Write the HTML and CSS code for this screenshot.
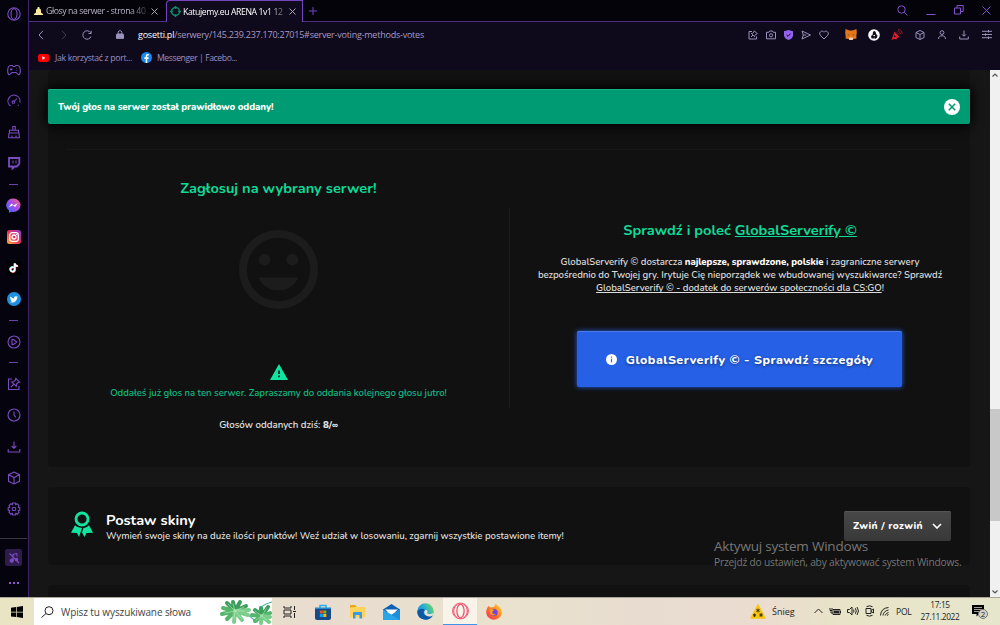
FILE: index.html
```html
<!DOCTYPE html>
<html lang="pl">
  <head>
    <meta charset="utf-8">
    <title>Katujemy.eu ARENA 1v1</title>
    <link rel="stylesheet" href="styles.css">
  </head>
  <body>
    <div class="screen">
      <div class="browser">
        <nav class="sidebar">
          <div class="opera">
            <svg width="14" height="14" viewBox="0 0 14 14"><circle cx="7" cy="7" r="6.2"/><ellipse cx="7" cy="7" rx="3" ry="5.4"/></svg>
          </div>
          <div class="side-list">
            <div class="side-item"><svg width="14" height="12" viewBox="0 0 14 12"><path d="M3.5 1.5h1.8l.8 1h1.8l.8-1h1.800c2 0 2.800 2.200 2.800 5.500 0 2.400-.6 3.600-1.600 3.600-1.200 0-1.700-2.100-2.800-2.100H5.100c-1.100 0-1.600 2.100-2.800 2.100-1 0-1.600-1.200-1.600-3.600 0-3.300.8-5.500 2.800-5.500z"/><path d="M3 5.400h2.400M4.200 4.200v2.400M9.600 4.400v.6M9.600 6v.6"/></svg></div>
            <div class="side-item"><svg width="14" height="14" viewBox="0 0 14 14"><path d="M3.500 12a6 6 0 1 1 9.300-3.500M10.800 11.600l.8-.7M6.800 8l3-3.500"/><circle cx="6.400" cy="8" r="1.300"/></svg></div>
            <div class="side-item"><svg width="14" height="14" viewBox="0 0 14 14"><path d="M5.800 5V1.500h2.400V5M2.500 8V5.300h9V8M2 8h10l.4 4.800H1.600L2 8M5 10.500v2.100M9 10.500v2.100"/></svg></div>
            <div class="side-item"><svg width="14" height="14" viewBox="0 0 14 14"><path class="thick" d="M2 2h10.300v6l-2.500 2.500H7.500L5.500 12.500v-2H2z"/><path d="M6 4.500v3M9 4.500v3"/></svg></div>
            <div class="side-sep"></div>
            <div class="side-item">
              <svg class="flat" width="15" height="15" viewBox="0 0 15 15">
                <defs><linearGradient id="msg" x1="0" y1="1" x2="1" y2="0"><stop offset="0" stop-color="#2777fb"/><stop offset=".5" stop-color="#a14af0"/><stop offset="1" stop-color="#ff6470"/></linearGradient></defs>
                <path fill="url(#msg)" d="M7.500.5a7 6.700 0 0 1 0 13.400l-2-.2L3 14.800V12.500A7 6.700 0 0 1 7.500.5z"/>
                <path fill="#fff" d="M2.800 9.200l2.700-3.600 2.300 1.600 3.900-1.900-2.500 3.600-2.500-1.600z"/>
              </svg>
            </div>
            <div class="side-item">
              <svg class="flat" width="14" height="14" viewBox="0 0 14 14">
                <defs><linearGradient id="insta" x1="0" y1="1" x2="1" y2="0"><stop offset="0" stop-color="#fdb733"/><stop offset=".5" stop-color="#e8305e"/><stop offset="1" stop-color="#8c3ad0"/></linearGradient></defs>
                <rect width="14" height="14" rx="2.500" fill="url(#insta)"/>
                <rect x="2.700" y="2.700" width="8.600" height="8.600" rx="2.400" fill="none" stroke="#fff" stroke-width="1.300"/><circle cx="7" cy="7" r="2" fill="none" stroke="#fff" stroke-width="1.300"/><circle cx="9.600" cy="4.500" r=".6" fill="#fff"/>
              </svg>
            </div>
            <div class="side-item">
              <svg class="flat" width="14" height="14" viewBox="0 0 14 14"><rect width="14" height="14" rx="2.500" fill="#000"/><g fill="none" stroke-width="1.700"><path stroke="#25e5e0" d="M6.400 6.300a2.200 2.200 0 1 0 1 2V2.300c.3 1.500 1.400 2.500 3 2.700"/><path stroke="#f6345d" d="M7.300 6.900a2.200 2.200 0 1 0 1 2V2.800c.3 1.500 1.400 2.500 3 2.700"/><path stroke="#fff" d="M6.800 6.600a2.200 2.200 0 1 0 1 2V2.500c.3 1.500 1.400 2.500 3 2.700"/></g></svg>
            </div>
            <div class="side-item">
              <svg class="flat" width="14" height="14" viewBox="0 0 14 14"><circle cx="7" cy="7" r="7" fill="#1d91e0"/><path fill="#fff" d="M11.200 4.400l-1 1.100c0 3.700-4 6.400-7.300 4.400 1 0 1.700-.2 2.300-.7-.8-.1-1.200-.5-1.400-1.100h.6c-.8-.3-1.200-.9-1.200-1.600l.6.2c-.6-.5-.8-1.300-.4-2.100 1 1.100 2.200 1.700 3.700 1.800-.3-1.900 1.600-2.700 2.800-1.600l1-.4-.5.8z"/></svg>
            </div>
            <div class="side-sep"></div>
            <div class="side-item"><svg width="14" height="14" viewBox="0 0 14 14"><circle cx="7" cy="7" r="6"/><path d="M5 4.600h1.500L9.800 7 6.500 9.400H5z"/></svg></div>
            <div class="side-sep"></div>
            <div class="side-item"><svg width="14" height="14" viewBox="0 0 14 14"><path d="M5 2H1.500v10.500H12V9M4 10l3-3M8.800 1.400l3.800 3.800-1.500.3-1.700 1.800-.2 2L4.700 4.900l2-.2 1.800-1.800z"/></svg></div>
            <div class="side-item"><svg width="14" height="14" viewBox="0 0 14 14"><circle cx="7" cy="7" r="6"/><path d="M7 3.500V7l1.800 2.300"/></svg></div>
            <div class="side-item"><svg width="14" height="14" viewBox="0 0 14 14"><path d="M7 1.500v6.500M4.700 6L7 8.300 9.300 6M1.200 9v3h11.600V9"/></svg></div>
            <div class="side-item"><svg width="14" height="14" viewBox="0 0 14 14"><path d="M7 1l5.500 2.700v6.600L7 13 1.500 10.300V3.700zM1.500 3.700L7 6.600l5.500-2.900M7 6.600V13"/></svg></div>
            <div class="side-item"><svg width="14" height="14" viewBox="0 0 14 14"><circle cx="7" cy="7" r="1.800"/><path d="M5.700 1h2.600l.4 1.600 1.400-.8 1.900 1.900-.8 1.500 1.600.5v2.600l-1.600.5.8 1.500-1.900 1.900-1.400-.8-.4 1.600H5.700l-.4-1.600-1.400.8L2 10.300l.8-1.500-1.600-.5V5.700l1.600-.5L2 3.700l1.900-1.900 1.400.8z"/></svg></div>
          </div>
          <div class="side-bottom">
            <div class="player"><svg width="12" height="12" viewBox="0 0 12 12"><path d="M5 8.500V2.500l4-1M9 1.500v3M1.500 1.500l9.500 9.500"/><circle class="dot" cx="3.700" cy="8.700" r="1.600"/><circle class="dot" cx="8.500" cy="7.500" r="1.200"/></svg></div>
            <div class="more"><i></i><i></i><i></i></div>
          </div>
        </nav>

        <div class="window">
          <header class="tabs">
            <div class="tab">
              <svg width="9" height="9" viewBox="0 0 9 9"><path fill="#fbe6a2" d="M3.600 0h1.800v1.200L7 2.800v2.700L9 7v1H0V7l2-1.500V2.800l1.600-1.600z"/></svg>
              <span class="tab-name">Głosy na serwer - strona 40</span>
              <svg class="close" width="7" height="7" viewBox="0 0 7 7"><path d="M.5.5l6 6M6.500.5l-6 6"/></svg>
            </div>
            <div class="tab active">
              <svg width="11" height="11" viewBox="0 0 11 11" fill="none" stroke="#0b8f68" stroke-width="1.400"><circle cx="5.500" cy="5.500" r="4"/><path d="M5.500 0v2.800M5.500 8.200V11M0 5.500h2.800M8.200 5.500H11"/></svg>
              <span class="tab-name">Katujemy.eu ARENA 1v1 12</span>
              <svg class="close" width="7" height="7" viewBox="0 0 7 7"><path d="M.5.5l6 6M6.500.5l-6 6"/></svg>
            </div>
            <svg class="new-tab" width="8" height="8" viewBox="0 0 8 8"><path d="M4 0v8M0 4h8"/></svg>
            <div class="window-buttons">
              <svg width="11" height="11" viewBox="0 0 11 11"><circle cx="4.500" cy="4.500" r="3.700"/><path d="M7.200 7.200l3.300 3.300"/></svg>
              <svg class="minimize" width="10" height="10" viewBox="0 0 10 10"><path d="M.5 9.500h9"/></svg>
              <svg width="10" height="10" viewBox="0 0 10 10"><path d="M.5 3h6v6h-6zM3 3V.5h6.200V6.500H6.500"/></svg>
              <svg width="9" height="9" viewBox="0 0 9 9"><path d="M.5.5l8 8M8.500.5l-8 8"/></svg>
            </div>
          </header>

          <div class="address-bar">
            <svg width="6" height="10" viewBox="0 0 6 10"><path d="M5 .8L1 5l4 4.200"/></svg>
            <svg class="off" width="6" height="10" viewBox="0 0 6 10"><path d="M1 .8L5 5 1 9.200"/></svg>
            <svg class="reload" width="10" height="10" viewBox="0 0 10 10"><path d="M9 6.500A4.200 4.200 0 1 1 8.600 2.700M9.200.8v2.700H6.500"/></svg>
            <svg class="lock" width="8" height="9" viewBox="0 0 8 9"><path d="M2.200 4V2.500a1.800 1.800 0 0 1 3.600 0V4"/><rect x=".5" y="4" width="7" height="4.800" rx=".6"/></svg>
            <span class="url"><b>gosetti.pl</b>/serwery/145.239.237.170:27015#server-voting-methods-votes</span>
            <div class="tools">
              <svg width="10" height="10" viewBox="0 0 10 10"><path d="M4 1.500H1v7.500h7.500V6.500M3 7l2-2M6.300.8l3 3-1.300.4-1.200 1.300-.2 1.200-3.200-3.200 1.200-.2L5.900 2z"/></svg>
              <svg width="10" height="10" viewBox="0 0 10 10"><path d="M.5 2.300h2.300l.8-1.300h2.800l.8 1.300h2.300v6.500h-9z"/><circle cx="5" cy="5.300" r="1.600"/></svg>
              <svg width="9" height="10" viewBox="0 0 9 10"><path class="shield" d="M4.500 0L9 1.300v4C9 7.500 7 9.300 4.500 10 2 9.300 0 7.500 0 5.300v-4z"/><path class="tick" d="M2.500 5l1.500 1.400 2.600-2.800"/></svg>
              <svg width="10" height="10" viewBox="0 0 10 10"><path d="M1 1l8.500 4L1 9l1.300-4zM2.300 5h3"/></svg>
              <svg width="10" height="10" viewBox="0 0 10 10"><path d="M5 9L1.200 5.200C-.7 2.800 2.800-.7 5 2.200 7.200-.7 10.700 2.800 8.800 5.200z"/></svg>
            </div>
            <div class="extensions">
              <svg class="flat" width="12" height="11" viewBox="0 0 12 11"><path fill="#e2761b" d="M.5 0l4 1.500h3l4-1.500.3 4-.5 3 .2 2.500-3 .5L7.500 11h-3l-1-1-3-.5L.7 7 .2 4z"/><path fill="#8c3f12" d="M2.500 5.300l2 .5-.7 1zM9.500 5.300l-2 .5.700 1z"/><path fill="#e8d3bd" d="M4.500 8.500h3L8 10l-.7 1H4.700L4 10z"/></svg>
              <svg class="flat" width="12" height="12" viewBox="0 0 12 12"><circle cx="6" cy="6" r="5.800" fill="#fff"/><path fill="#15111f" d="M6 2c1.500 0 2 1 1.800 2L8.500 5.500l1 1-.4 2-1.300 1.300H6.500V8L5.800 9.500H3.500L3 7l1.500-1L5 3z"/><path fill="#fff" d="M5.500 6h1.500v1H5.500z"/></svg>
              <svg class="flat" width="12" height="12" viewBox="0 0 12 12"><path fill="#dd1c2c" d="M3.500 2.500l5 5.500-2.500 1-.5 1.500-2-.5L.5 11z"/><path fill="none" stroke="#9c1426" d="M6 3.500l2 2M6.500 2c1.500 0 2.800 1.300 3 3M7 .5c2.500 0 4 2 4.200 4"/><path fill="#17111f" d="M3.500 6l1.500 2H2.600z"/></svg>
              <svg width="10" height="10" viewBox="0 0 10 10"><path d="M5 .5l4 2v5l-4 2-4-2v-5zM1 2.500l4 2 4-2M5 4.500v5"/></svg>
              <svg width="8" height="9" viewBox="0 0 8 9"><circle cx="4" cy="2.600" r="1.900"/><path d="M.7 9V8c0-3 6.600-3 6.600 0v1"/></svg>
              <svg width="10" height="10" viewBox="0 0 10 10"><path d="M5 .5V6M3 4.300l2 2 2-2M.7 6.500V9h8.600V6.500"/></svg>
              <svg width="10" height="9" viewBox="0 0 10 9"><path d="M0 1.300h10M0 4.500h10M0 7.700h10M6.500 0v2.500M3.500 3.300v2.500M6.500 6.500V9"/></svg>
            </div>
          </div>

          <div class="bookmarks">
            <svg width="11" height="8" viewBox="0 0 11 8"><rect width="11" height="8" rx="2" fill="#f00"/><path fill="#fff" d="M4.400 2.200l3 1.800-3 1.800z"/></svg>
            <span>Jak korzystać z port...</span>
            <svg width="11" height="11" viewBox="0 0 11 11"><circle cx="5.500" cy="5.500" r="5.500" fill="#1688f0"/><path fill="#fff" d="M4.700 11V7H3.300V5.300h1.400V4.100C4.700 2.700 5.500 2 6.800 2l1 .1v1.400H7c-.6 0-.8.400-.8.8v1h1.500L7.500 7H6.200v4z"/></svg>
            <span class="bm-messenger">Messenger | Facebo...</span>
          </div>

          <div class="viewport">
            <main class="page">
              <section class="panel vote">
                <div class="columns">
                  <div class="vote-left">
                    <h2>Zagłosuj na wybrany serwer!</h2>
                    <svg class="smile" width="95" height="95" viewBox="0 0 24 24"><path d="M12 2a10 10 0 1 0 0 20 10 10 0 0 0 0-20zm0 18a8 8 0 1 1 0-16 8 8 0 0 1 0 16zM8.500 11a1.500 1.500 0 1 0 0-3 1.500 1.500 0 0 0 0 3zm7 0a1.500 1.500 0 1 0 0-3 1.500 1.500 0 0 0 0 3zM7 14h10c-.8 2-2.700 3.300-5 3.300S7.800 16 7 14z"/></svg>
                    <svg class="warning" width="18" height="16" viewBox="0 0 18 16"><path fill="#0fe5a0" d="M9 0l9 16H0z"/><path fill="#111" d="M8.200 6.500h1.600v3.600H8.200zM8.200 11.600h1.600v1.700H8.200z"/></svg>
                    <p class="voted">Oddałeś już głos na ten serwer. Zapraszamy do oddania kolejnego głosu jutro!</p>
                    <p class="count">Głosów oddanych dziś: <b>8/∞</b></p>
                  </div>
                  <div class="vote-right">
                    <h2>Sprawdź i poleć <a>GlobalServerify ©</a></h2>
                    <p class="desc">
                      <span class="line">GlobalServerify © dostarcza <b>najlepsze, sprawdzone, polskie</b> i zagraniczne serwery</span>
                      <span class="line">bezpośrednio do Twojej gry. Irytuje Cię nieporządek we wbudowanej wyszukiwarce? Sprawdź</span>
                      <span class="line"><a>GlobalServerify © - dodatek do serwerów społeczności dla CS:GO</a>!</span>
                    </p>
                    <div class="btn-details">
                      <svg width="11" height="11" viewBox="0 0 11 11"><circle cx="5.500" cy="5.500" r="5.500" fill="#fff"/><path fill="#2560e6" d="M4.900 4.700h1.200v3.500H4.900zM4.900 2.600h1.200v1.200H4.900z"/></svg>
                      <span>GlobalServerify © - Sprawdź szczegóły</span>
                    </div>
                  </div>
                </div>
              </section>

              <section class="panel skins">
                <svg width="22" height="26" viewBox="0 0 22 26"><circle cx="11" cy="8" r="6" fill="none" stroke="#0fe5a0" stroke-width="2.800"/><path fill="#0fe5a0" d="M4 14.200C6 16 9 17 11 17l-3 9-2-4-6-.3zM18 14.200C16 16 14.500 16.800 12.500 17L11 21.500l2.500 4.500 2-4 6.500-.3z"/></svg>
                <div class="skins-text">
                  <h3>Postaw skiny</h3>
                  <p>Wymień swoje skiny na duże ilości punktów! Weź udział w losowaniu, zgarnij wszystkie postawione itemy!</p>
                </div>
                <div class="btn-toggle">
                  <span>Zwiń / rozwiń</span>
                  <svg width="10" height="6" viewBox="0 0 10 6"><path d="M1 1l4 4 4-4"/></svg>
                </div>
              </section>

              <section class="panel next"></section>
            </main>
            <div class="alert">
              <span>Twój głos na serwer został prawidłowo oddany!</span>
              <svg width="16" height="16" viewBox="0 0 16 16"><circle cx="8" cy="8" r="8" fill="#fff"/><path d="M4.800 4.800l6.400 6.400M11.200 4.800l-6.400 6.400" stroke="#009b72" stroke-width="1.500"/></svg>
            </div>
            <div class="activate">
              <div class="activate-title">Aktywuj system Windows</div>
              <div class="activate-text">Przejdź do ustawień, aby aktywować system Windows.</div>
            </div>
            <div class="scrollbar">
              <svg width="6" height="4" viewBox="0 0 6 4"><path d="M.5 3.500L3 1l2.500 2.500"/></svg>
              <div class="thumb"></div>
              <svg width="6" height="4" viewBox="0 0 6 4"><path d="M.5.5L3 3 5.500.5"/></svg>
            </div>
          </div>
        </div>
      </div>

      <footer class="taskbar">
        <div class="start"><svg width="12" height="12" viewBox="0 0 12 12"><path d="M0 1.700L5 1v4.700H0zM5.700.900L12 0v5.700H5.700zM0 6.400h5v4.700l-5-.7zM5.700 6.400H12V12l-6.300-.9z"/></svg></div>
        <div class="search">
          <svg width="13" height="12" viewBox="0 0 13 12"><circle cx="8" cy="4.700" r="4" fill="none" stroke="#222"/><path d="M5 7.500L.5 11.500" stroke="#222"/></svg>
          <span>Wpisz tu wyszukiwane słowa</span>
          <svg class="plant" width="54" height="26" viewBox="0 0 54 26">
            <path class="stem" d="M40 14c1-6 6-9 14-11M22 12c8 2 12 8 17 11"/>
            <g class="leaf">
              <path class="far" d="M17 12L9 4M17 12L15 3M17 12l5-9M17 12l11-5"/>
              <path d="M17 12L5 9M17 12L4 15M17 12L9 20"/>
              <path class="near" d="M17 12l-1 11M17 12l7 9M17 12l13 4M17 12l14-1"/>
            </g>
            <g class="leaf">
              <path class="far" d="M44 17l-7-6M44 17l-1-8M44 17l6-9"/>
              <path d="M44 17l-10-1M44 17l-7 5M44 17l8-3"/>
              <path class="near" d="M44 17l-1 7M44 17l7 6M44 17l8 1"/>
            </g>
            <path class="vein" d="M17 12L10 5M17 12l-2-7M17 12l9-4M17 12L7 14M17 12l-1 8M17 12l6 7M17 12h10M44 17l-7-5M44 17l4-7M44 17l-6 4M44 17l5 4"/>
          </svg>
        </div>
        <div class="apps">
          <div class="app"><svg width="13" height="12" viewBox="0 0 13 12" fill="none" stroke="#222"><path d="M1 0v2h7V0M1 12v-2h7v2M1 4h7v4H1zM11.500 0v4M11.500 7v5M10 5.500h3"/></svg></div>
          <div class="app"><svg width="16" height="16" viewBox="0 0 16 16"><path d="M5 4V1.500h6V4" fill="none" stroke="#24b2ee" stroke-width="1.500"/><path fill="#174a86" d="M0 4h16v10a2 2 0 0 1-2 2H2a2 2 0 0 1-2-2z"/><path fill="#2289d0" d="M0 3.500h16V5H0z"/><path fill="#f25022" d="M4.800 6.500h3v3h-3z"/><path fill="#7fba00" d="M8.300 6.500h3v3h-3z"/><path fill="#00a4ef" d="M4.800 10h3v3h-3z"/><path fill="#ffb900" d="M8.300 10h3v3h-3z"/></svg></div>
          <div class="app"><svg width="15" height="14" viewBox="0 0 15 14"><path fill="#e6a817" d="M0 0h5l1.500 1.500V5H0z"/><path fill="#ffd35c" d="M0 2.500l6-.5h9v10.500H0z"/><path fill="#3b9be0" d="M3 13.500V8a1 1 0 0 1 1-1h7a1 1 0 0 1 1 1v5.500H9.500V10h-4v3.500z"/></svg></div>
          <div class="app"><svg width="17" height="16" viewBox="0 0 17 16"><path fill="#0e62b5" d="M8.500 0L17 5.500V8H0V5.500z"/><path fill="#fff" d="M2 5.500h13L8.500 11z"/><path fill="#28a6e8" d="M0 5.500l8.500 5.200L17 5.500V16H0z"/><path fill="#1f8fdc" d="M17 5.500V16L6 9.500l2.500 1.200z"/></svg></div>
          <div class="app">
            <svg width="17" height="17" viewBox="0 0 17 17">
              <defs><linearGradient id="edge" x1="0" y1=".8" x2="1" y2=".2"><stop offset="0" stop-color="#1683cc"/><stop offset=".5" stop-color="#24a8dd"/><stop offset="1" stop-color="#6fdc5c"/></linearGradient></defs>
              <circle cx="8.500" cy="8.500" r="8.300" fill="url(#edge)"/><path fill="#0d57a5" d="M.3 8.500C2 5.500 6 5 8 7c-3 2-1.500 7.500 7.500 6A8.300 8.300 0 0 1 .3 8.500z"/><path fill="#ebe0cf" d="M8 7.200c2.300-.7 3.300 1.300 2.300 2.600-.5 1.300 3 2 6.200.2-.3 1.500-.8 2.300-1.500 3-5 1.800-9.500-2.500-7-5.800z"/>
            </svg>
          </div>
          <div class="app current"><svg width="17" height="18" viewBox="0 0 17 18" fill="none" stroke="#f0506e"><circle cx="8.500" cy="9" r="7.900"/><ellipse cx="8.500" cy="9" rx="3.600" ry="6.800" stroke-width="1.300"/><path d="M5.500 2.200a8 8 0 0 0 0 13.600M11.500 2.200a8 8 0 0 1 0 13.600"/></svg></div>
          <div class="app">
            <svg width="16" height="16" viewBox="0 0 16 16">
              <defs><linearGradient id="fox" x1="0" y1="1" x2="1" y2="0"><stop offset="0" stop-color="#f5246a"/><stop offset=".5" stop-color="#ff7a1f"/><stop offset="1" stop-color="#ffe03a"/></linearGradient></defs>
              <path fill="url(#fox)" d="M2.500 2l2 1.500L8 3 9.500 0C13 2 16 5 15.800 9A7.900 7.900 0 0 1 .2 9C0 6 1 4 2.500 2z"/><circle cx="8" cy="8.500" r="3.600" fill="#7541d8"/><path fill="#ff9a20" d="M3.500 5c2-.7 3.500 0 4.500 1.500L6 8c.5 1.500 2 2.500 4 2-2 2.500-5.500 1.500-6.300-1z"/>
            </svg>
          </div>
        </div>
        <div class="tray">
          <svg class="weather" width="16" height="15" viewBox="0 0 16 15"><path fill="#f8c512" stroke="#f8c512" stroke-linejoin="round" stroke-width="1.500" d="M8 1l7 13H1z"/><path stroke="#222" stroke-width=".8" d="M8 4.500v4M6.300 5.500l3.400 2M9.700 5.500l-3.400 2M4.500 9.500v3.500M3 10.300l3 1.800M6 10.300l-3 1.800M11 9v4M9.300 10l3.400 2M12.700 10l-3.400 2"/></svg>
          <span class="weather-name">Śnieg</span>
          <svg class="ico chevron" width="9" height="6" viewBox="0 0 9 6"><path d="M.5 5l4-4 4 4"/></svg>
          <svg class="ico" width="12" height="9" viewBox="0 0 12 9"><path d="M4 2.500h7v5H4zM1 1v2.500h2V1M2 3.500V6h2"/><path class="fill" d="M5 3.500h5v3H5zM11 4h1v2h-1z"/></svg>
          <svg class="ico" width="12" height="10" viewBox="0 0 12 10"><path d="M.5 3.500h2L5 1v8L2.500 6.500h-2zM6.500 3.500q1 1.500 0 3M8.300 2.200q2 2.800 0 5.600M10 1q3 4 0 8"/></svg>
          <svg class="ico" width="9" height="12" viewBox="0 0 9 12"><path d="M1 3.500h5v5H1zM6 5.500l2.500-1.500v4L6 6.500M1.500 1.700Q4.500 0 7.500 1.700M1.500 10.300q3 1.700 6 0"/></svg>
          <svg class="ico wifi" width="9" height="9" viewBox="0 0 9 9"><path d="M.5 8.500Q1 1 8.500.5M3 8.500Q3.500 4 8.500 3M5.200 8.500Q6 6 8.500 5.500M7 8.500l1.500-1"/></svg>
          <span class="lang">POL</span>
          <div class="clock"><div>17:15</div><div>27.11.2022</div></div>
          <div class="notify"><svg width="12" height="12" viewBox="0 0 12 12"><path d="M0 0h12v9H7L4.500 11.500V9H0z"/><path d="M2 2.500h8M2 4.500h8M2 6.500h5" stroke="#e8e4cc" stroke-width=".7"/></svg><span class="badge">2</span></div>
        </div>
      </footer>
    </div>
  </body>
</html>
```
FILE: styles.css
```css
* {
  box-sizing: border-box;
}
body {
  margin: 0;
  font-family: "Open Sans", "Noto Sans", sans-serif;
}
h2,
h3,
p {
  margin: 0;
}
svg {
  display: block;
  flex-shrink: 0;
}
.screen {
  width: 1000px;
  height: 625px;
  display: flex;
  flex-direction: column;
  overflow: hidden;
  background-color: #111;
}
.browser {
  flex: 1;
  min-height: 0;
  display: flex;
}

/* sidebar */
.sidebar {
  width: 29px;
  display: flex;
  flex-direction: column;
  background-color: #05030d;
  border-right: 1px solid #3d2468;
  padding-right: 1px;
}
.sidebar svg {
  fill: none;
  stroke: #7a4cc0;
  stroke-width: 1.1;
}
.sidebar svg.flat {
  stroke: none;
}
.sidebar .thick {
  stroke-width: 1.8;
}
.opera {
  height: 28px;
  display: flex;
  align-items: center;
  justify-content: center;
}
.side-list {
  flex: 1;
  padding-top: 26px;
}
.side-item {
  height: 31.27px;
  display: flex;
  align-items: center;
  justify-content: center;
}
.side-sep {
  height: 11px;
  padding-top: 5px;
}
.side-sep::before {
  content: "";
  display: block;
  width: 9px;
  height: 1px;
  margin: 0 auto;
  background-color: #6a41a8;
}
.side-bottom {
  height: 59px;
  border-top: 1px solid #3c3843;
  padding-top: 10px;
}
.player {
  width: 17px;
  height: 17px;
  margin: 0 auto;
  display: flex;
  align-items: center;
  justify-content: center;
  background-color: #2c1b4b;
  border-radius: 2px;
}
.sidebar .dot {
  fill: #7a4cc0;
}
.more {
  display: flex;
  justify-content: center;
  gap: 2px;
  margin-top: 16px;
}
.more i {
  width: 2px;
  height: 2px;
  background-color: #8a5bd0;
}

/* tabs and toolbars */
.window {
  flex: 1;
  min-width: 0;
  display: flex;
  flex-direction: column;
}
.tabs {
  height: 22px;
  display: flex;
  align-items: center;
  background-color: #04030a;
  box-shadow: inset 0 -1px #4e2e85;
}
.tab {
  width: 137px;
  height: 22px;
  padding: 0 8px 0 5px;
  display: flex;
  align-items: center;
  font-size: 8.7px;
  color: #b9b4c4;
}
.tab-name {
  flex: 1;
  margin: 0 3px 0 3px;
  white-space: nowrap;
  letter-spacing: -0.4px;
  -webkit-mask-image: linear-gradient(to right, #000 82%, rgba(0, 0, 0, 0.2));
  mask-image: linear-gradient(to right, #000 82%, rgba(0, 0, 0, 0.2));
}
.tab.active {
  background-color: #0f0b1c;
  border: 1px solid #7545c0;
  border-bottom: none;
  border-radius: 4px 0 0 0;
  padding: 0 6px 0 3px;
  color: #fff;
}
.active .tab-name {
  margin-left: 2px;
}
.close {
  stroke: #aaa5b5;
}
.new-tab {
  margin-left: 6px;
  stroke: #7545c0;
}
.window-buttons {
  margin-left: auto;
  margin-right: 9px;
  padding-bottom: 2px;
  display: flex;
  align-items: center;
  gap: 18px;
}
.window-buttons svg {
  fill: none;
  stroke: #8250d0;
}
.address-bar {
  height: 26px;
  display: flex;
  align-items: center;
  padding: 0 8px 1px 9px;
  background-color: #0e0a1b;
}
.address-bar svg {
  fill: none;
  stroke: #9c91bb;
}
.address-bar > svg {
  margin-right: 17px;
}
.address-bar .off {
  margin-right: 15px;
  stroke: #433c58;
}
.address-bar .lock {
  margin: 0 14px 0 7px;
}
.lock rect {
  fill: #9c91bb;
}
.url {
  font-size: 9px;
  letter-spacing: -0.23px;
  color: #a79bc6;
}
.url b {
  font-weight: normal;
  color: #fff;
}
.tools {
  margin-left: auto;
  display: flex;
  align-items: center;
  gap: 8px;
}
.address-bar .shield {
  fill: #9461f0;
  stroke: none;
}
.address-bar .tick {
  stroke: #0e0a1b;
}
.extensions {
  margin-left: 16px;
  display: flex;
  align-items: center;
  gap: 13px;
}
.extensions svg.flat {
  margin-right: -2px;
  stroke: none;
}
.extensions svg.flat + svg:not(.flat) {
  margin-left: 1px;
}
.bookmarks {
  height: 22px;
  display: flex;
  align-items: center;
  padding: 0 0 3px 9px;
  background-color: #0e0a1b;
  font-size: 8.7px;
  letter-spacing: -0.33px;
  color: #9b8fc0;
}
.bookmarks span {
  width: 78px;
  margin: 0 8px 0 6px;
  white-space: nowrap;
}
.bookmarks .bm-messenger {
  margin-left: 5px;
  width: 90px;
  letter-spacing: -0.45px;
}

/* page */
.viewport {
  position: relative;
  flex: 1;
  min-height: 0;
  display: flex;
  overflow: hidden;
  background-color: #161616;
  font-family: Nunito, Lato, sans-serif;
}
.page {
  width: 961px;
  padding: 0 20px 0 19px;
}
.panel {
  background-color: #111;
  border-radius: 4px;
  margin-bottom: 20px;
}
.vote {
  height: 397px;
  padding: 79px 0 0;
}
.columns {
  display: grid;
  grid-template-columns: 1fr 1fr;
  text-align: center;
}
.columns::before {
  content: "";
  grid-column: 1 / 3;
  height: 1px;
  margin: 0 18px;
  background-color: #181818;
}
.columns h2 {
  font-size: 14.6px;
  line-height: 20px;
  color: #0ddb98;
}
.columns a {
  text-decoration: underline;
}
.vote-left {
  padding-top: 28px;
}
.smile {
  margin: 24px auto 0;
  fill: #1c1c1c;
}
.warning {
  margin: 47px auto 0;
}
.voted {
  margin-top: 6px;
  font-size: 9.6px;
  font-weight: 600;
  line-height: 14px;
  letter-spacing: -0.05px;
  color: #10b981;
}
.count {
  margin-top: 18px;
  font-size: 9.7px;
  font-weight: 600;
  line-height: 14px;
  color: #e4e4e4;
}
.count b {
  font-weight: 800;
}
.vote-right {
  height: 200px;
  margin-top: 58px;
  padding-top: 12px;
  border-left: 1px solid #1a1a1a;
}
.desc {
  margin-top: 15px;
  font-size: 9.6px;
  font-weight: 600;
  line-height: 13.2px;
  letter-spacing: -0.05px;
  color: #dcdcdc;
}
.desc b {
  font-weight: 800;
  color: #fff;
}
.line {
  display: block;
  white-space: nowrap;
}
.btn-details {
  width: 325px;
  height: 56px;
  margin: 36px 0 0 67px;
  padding-top: 2px;
  display: flex;
  align-items: center;
  justify-content: center;
  gap: 9px;
  background-color: #2560e6;
  border-radius: 2px;
  box-shadow: inset 0 1px #4b7ae0, 0 0 5px #2560e6;
  font-size: 12.4px;
  font-weight: 800;
  letter-spacing: 0.5px;
  color: #fff;
  text-shadow: 0 1px 3px rgba(0, 0, 0, 0.5);
}
.skins {
  height: 78px;
  padding: 0 19px 0 23px;
  display: flex;
  align-items: center;
}
.skins > svg {
  margin-bottom: 4px;
}
.skins-text {
  flex: 1;
  margin-left: 13px;
  padding-top: 1px;
}
.skins h3 {
  font-size: 14.6px;
  line-height: 18px;
  color: #fff;
}
.skins p {
  font-size: 9.6px;
  font-weight: 600;
  line-height: 14px;
  letter-spacing: -0.06px;
  color: #dcdcdc;
}
.btn-toggle {
  width: 107px;
  height: 30px;
  margin-bottom: 1px;
  display: flex;
  align-items: center;
  justify-content: center;
  gap: 9px;
  background: linear-gradient(#484848, #383838);
  border-radius: 2px;
  box-shadow: inset 0 1px #555;
  font-size: 10.2px;
  font-weight: 800;
  letter-spacing: 0.4px;
  color: #fff;
}
.btn-toggle svg {
  fill: none;
  stroke: #fff;
  stroke-width: 1.6;
}
.next {
  height: 40px;
}
.alert {
  position: absolute;
  left: 19px;
  top: 19px;
  width: 922px;
  height: 35px;
  padding: 0 10px;
  display: flex;
  align-items: center;
  justify-content: space-between;
  background-color: #009b72;
  border-radius: 2px;
  box-shadow: inset 0 1px #12b386, 0 0 12px 2px #000;
  font-size: 9.7px;
  font-weight: 800;
  letter-spacing: -0.09px;
  color: #fff;
}
.activate {
  position: absolute;
  left: 685px;
  top: 467px;
  white-space: nowrap;
  font-family: "Open Sans", sans-serif;
  color: #777;
}
.activate-title {
  font-size: 13.5px;
  line-height: 18px;
  letter-spacing: -0.2px;
}
.activate-text {
  font-size: 10.2px;
  line-height: 14px;
  letter-spacing: -0.19px;
}
.scrollbar {
  width: 10px;
  margin-left: auto;
  padding: 3px 0;
  display: flex;
  flex-direction: column;
  align-items: center;
  background-color: #f0f0f0;
}
.scrollbar svg {
  fill: none;
  stroke: #555;
  stroke-width: 1.2;
}
.thumb {
  width: 10px;
  height: 112px;
  margin: 332px 0 auto;
  background-color: #c8c8c8;
}

/* taskbar */
.taskbar {
  height: 28px;
  display: flex;
  border-top: 1px solid #aaa69a;
  background: linear-gradient(to right, #e9e4c4 0, #e9e1cb 200px, #e8dccf 330px, #e9e2cd 500px, #e8dcd0 640px, #ebdcd0 760px, #e8e4c8 850px, #e6e6cc);
  color: #222;
}
.start {
  width: 34px;
  display: flex;
  align-items: center;
  justify-content: center;
}
.search {
  width: 238px;
  padding-left: 7px;
  display: flex;
  align-items: center;
  background-color: #fff;
  font-size: 10px;
  letter-spacing: -0.1px;
  color: #444;
}
.search span {
  flex: 1;
  margin-left: 7px;
  white-space: nowrap;
}
.plant {
  fill: none;
  stroke-linecap: round;
}
.stem {
  stroke: #44aa9a;
  stroke-width: 1.2;
}
.leaf {
  stroke: #55b56c;
  stroke-width: 4;
}
.leaf .far {
  stroke: #3c9d5c;
}
.leaf .near {
  stroke: #7bcd8c;
}
.vein {
  stroke: #b9ecb8;
  stroke-width: 0.6;
}
.apps {
  display: flex;
}
.app {
  width: 34.2px;
  display: flex;
  align-items: center;
  justify-content: center;
}
.current {
  background-color: #f8f4ea;
  border-bottom: 1px solid #3d94e8;
}
.tray {
  flex: 1;
  display: flex;
  align-items: center;
  justify-content: flex-end;
  padding: 0 12px 1px 0;
  font-size: 9px;
}
.weather-name {
  width: 26px;
  margin: 0 16px 0 6px;
}
.ico {
  margin-right: 6px;
  fill: none;
  stroke: #222;
}
.ico .fill {
  fill: #222;
  stroke: none;
}
.lang {
  width: 16px;
  margin: 0 8px 0 1px;
  font-size: 8.5px;
  letter-spacing: -0.2px;
}
.clock {
  width: 40px;
  text-align: center;
  font-size: 8.3px;
  line-height: 12px;
  letter-spacing: -0.35px;
}
.notify {
  position: relative;
  width: 16px;
  height: 12px;
  margin-left: 12px;
}
.badge {
  position: absolute;
  left: 6px;
  top: 4px;
  width: 10px;
  height: 10px;
  border: 1px solid #777;
  border-radius: 50%;
  background-color: #d8d6c8;
  font-size: 8px;
  line-height: 8px;
  text-align: center;
}
```
